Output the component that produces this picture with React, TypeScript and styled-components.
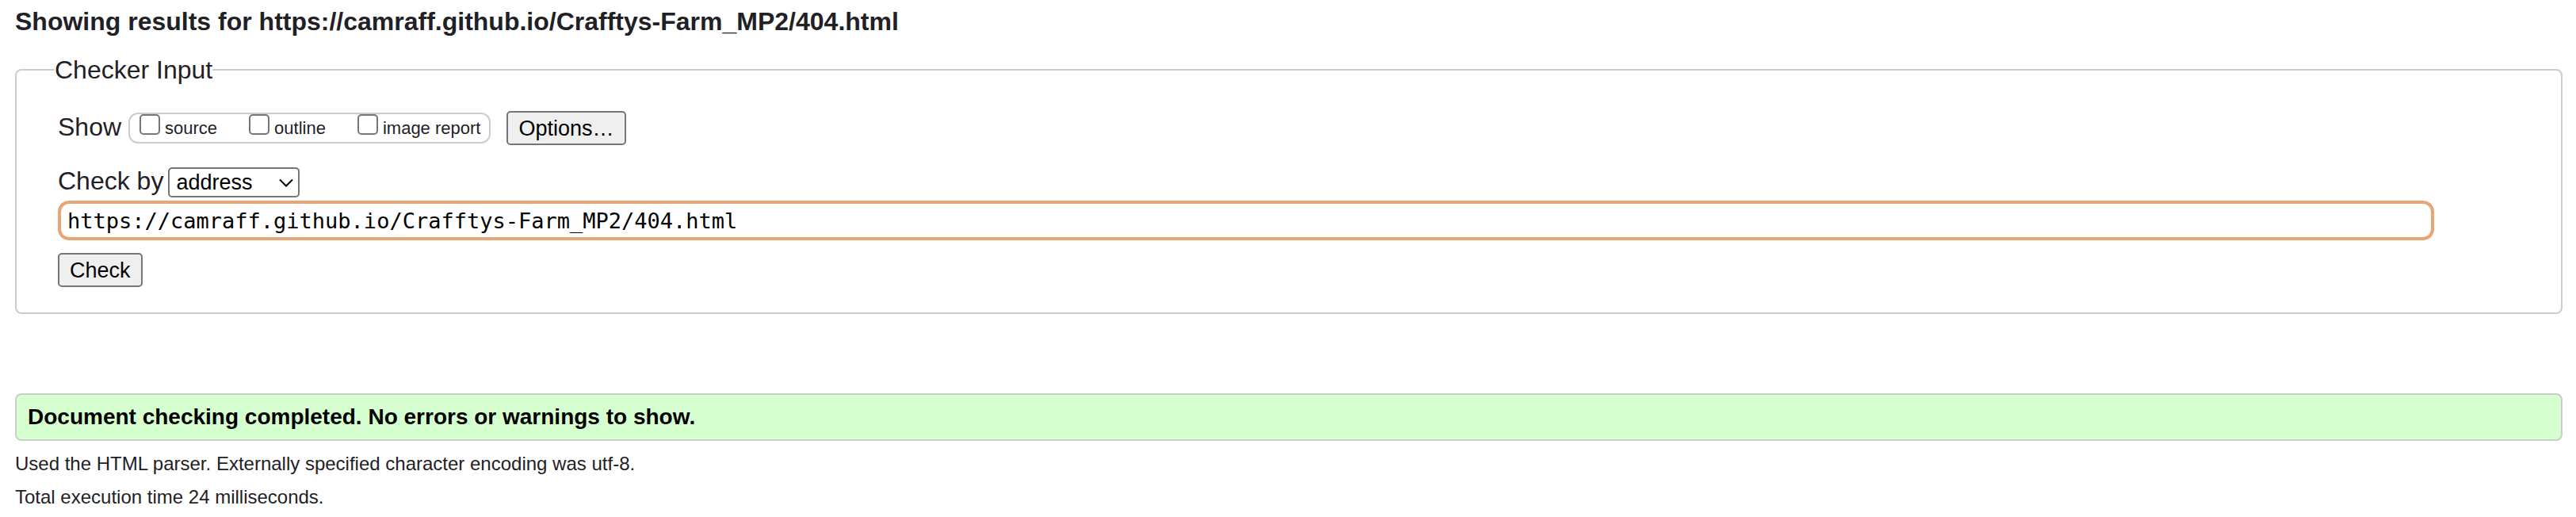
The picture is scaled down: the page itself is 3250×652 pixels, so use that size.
import React from "react";
import styled, { createGlobalStyle } from "styled-components";

const GlobalStyle = createGlobalStyle`
  *, *::before, *::after { box-sizing: border-box; }
  body {
    margin: 0;
    background: #fff;
    color: #1f2126;
    font-family: "Liberation Sans", Arial, Helvetica, sans-serif;
    font-size: 32px;
    line-height: 36px;
  }
`;

const Page = styled.div`
  padding: 9px 17px 0 19px;
`;

const Title = styled.h1`
  margin: 0;
  font-size: 32px;
  line-height: 36px;
  font-weight: bold;
`;

const CheckerForm = styled.form`
  margin: 25px 0 100px;
`;

const Fieldset = styled.fieldset`
  margin: 0;
  min-width: 0;
  padding: 34px 160px 32px 52px;
  border: 2px solid #ccc;
  border-radius: 8px;
`;

const Legend = styled.legend`
  margin-left: -4px;
  padding: 0;
`;

const Row = styled.div`
  display: flex;
  align-items: center;
`;

const ShowRow = styled(Row)`
  height: 43px;
  margin-bottom: 28px;
`;

const AddressRow = styled(Row)`
  gap: 6px;
  height: 38px;
  margin-bottom: 4px;
`;

const RowTitle = styled.span`
  padding-bottom: 4px;
`;

const ShowGroup = styled.div`
  display: flex;
  gap: 40px;
  height: 39px;
  margin: 0 20px 0 9px;
  padding: 0 11px 0 12px;
  border: 2px solid #ccc;
  border-radius: 12px;
`;

const CheckLabel = styled.label`
  display: flex;
  gap: 6px;
  font-size: 22px;
  line-height: 36px;
`;

const Checkbox = styled.input`
  appearance: none;
  width: 26px;
  height: 26px;
  margin: 0;
  border: 2px solid #767676;
  border-radius: 5px;
  background: #fff;
  &:checked { background: #767676; }
`;

const Button = styled.button`
  height: 43px;
  padding: 0 13px;
  border: 2px solid #767676;
  border-radius: 5px;
  background: #efefef;
  color: #000;
  font-family: inherit;
  font-size: 27px;
  line-height: 36px;
`;

const SelectWrap = styled.div`
  position: relative;
  height: 38px;
`;

const Select = styled.select`
  appearance: none;
  display: block;
  width: 166px;
  height: 38px;
  padding: 0 36px 0 8px;
  border: 2px solid #767676;
  border-radius: 5px;
  background: #fff;
  color: #000;
  font-family: inherit;
  font-size: 27px;
  line-height: 34px;
`;

const Chevron = styled.svg`
  position: absolute;
  top: 14px;
  right: 8px;
  pointer-events: none;
`;

const AddressInput = styled.input`
  display: block;
  width: 100%;
  height: 50px;
  margin: 0 0 16px;
  padding: 0 8px;
  border: 4px solid #e8a576;
  border-radius: 14px;
  outline: none;
  background: #fff;
  color: #000;
  font-family: "DejaVu Sans Mono", monospace;
  font-size: 27px;
`;

const Success = styled.p`
  margin: 0 0 11px;
  padding: 10px 14px;
  border: 2px solid #ccc;
  border-radius: 8px;
  background: #d6ffd0;
  color: #000;
  font-size: 28px;
  line-height: 36px;
  font-weight: bold;
`;

const Detail = styled.p`
  margin: 0 0 6px;
  font-size: 24px;
  line-height: 36px;
`;

const showOptions = ["source", "outline", "image report"];

export default function App() {
  return (
    <>
      <GlobalStyle />
      <Page>
        <Title>Showing results for https://camraff.github.io/Crafftys-Farm_MP2/404.html</Title>
        <CheckerForm onSubmit={(e) => e.preventDefault()}>
          <Fieldset>
            <Legend>Checker Input</Legend>
            <ShowRow>
              <RowTitle>Show</RowTitle>
              <ShowGroup role="group" aria-label="Show">
                {showOptions.map((name) => (
                  <CheckLabel key={name}>
                    <Checkbox type="checkbox" name={name} />
                    {name}
                  </CheckLabel>
                ))}
              </ShowGroup>
              <Button type="button">Options…</Button>
            </ShowRow>
            <AddressRow>
              <RowTitle as="label" htmlFor="method">Check by</RowTitle>
              <SelectWrap>
                <Select id="method" defaultValue="address">
                  <option value="address">address</option>
                  <option value="file upload">file upload</option>
                  <option value="text input">text input</option>
                </Select>
                <Chevron width="18" height="12" viewBox="0 0 18 12" fill="none" stroke="#000" strokeWidth="2" aria-hidden="true">
                  <path d="M1 1.5 L9 9.5 L17 1.5" />
                </Chevron>
              </SelectWrap>
            </AddressRow>
            <AddressInput
              type="url"
              aria-label="Address"
              defaultValue="https://camraff.github.io/Crafftys-Farm_MP2/404.html"
            />
            <Button type="submit">Check</Button>
          </Fieldset>
        </CheckerForm>
        <Success>Document checking completed. No errors or warnings to show.</Success>
        <Detail>Used the HTML parser. Externally specified character encoding was utf-8.</Detail>
        <Detail>Total execution time 24 milliseconds.</Detail>
      </Page>
    </>
  );
}
